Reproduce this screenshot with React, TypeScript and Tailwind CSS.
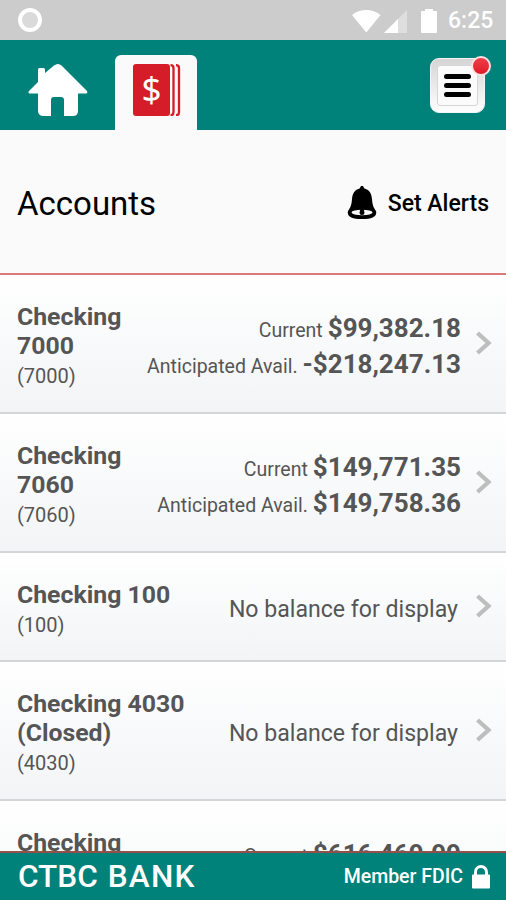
type Balance = { label: string; amount: string };
type Account = { name: string[]; number?: string; balances?: Balance[]; height: string };

const accounts: Account[] = [
  {
    name: ['Checking', '7000'],
    number: '(7000)',
    height: 'h-[139px]',
    balances: [
      { label: 'Current', amount: '$99,382.18' },
      { label: 'Anticipated Avail.', amount: '-$218,247.13' },
    ],
  },
  {
    name: ['Checking', '7060'],
    number: '(7060)',
    height: 'h-[139px]',
    balances: [
      { label: 'Current', amount: '$149,771.35' },
      { label: 'Anticipated Avail.', amount: '$149,758.36' },
    ],
  },
  { name: ['Checking 100'], number: '(100)', height: 'h-[109px]' },
  { name: ['Checking 4030', '(Closed)'], number: '(4030)', height: 'h-[139px]' },
  {
    name: ['Checking'],
    height: 'h-[139px]',
    balances: [{ label: 'Current', amount: '$616,469.99' }],
  },
];

function StatusBar() {
  return (
    <div className="flex h-10 shrink-0 items-center justify-between bg-[#cccccc] pr-3 pl-[18px]">
      <div className="size-6 rounded-full border-4 border-white bg-[#dadada]" />
      <div className="flex items-center pt-px">
        <svg width="85" height="26" viewBox="0 0 85 26" fill="#fff">
          <path d="M0 7C8 .2 20.500 .2 28.500 7L14.300 24.500Z" />
          <path d="M55 2V25H32Z" opacity=".35" />
          <path d="M46 11V25H32Z" />
          <path d="M73 1h8v3h-8z" />
          <rect x="69" y="3" width="16" height="22" rx="1" />
        </svg>
        <span className="ml-[11px] w-[46px] pt-px text-[23px] leading-6 font-medium whitespace-nowrap text-white">6:25</span>
      </div>
    </div>
  );
}

function HomeIcon() {
  return (
    <svg width="60" height="53" viewBox="0 0 60 53" fill="#fff">
      <path d="M10 5.500q0-1.500 1.500-1.500h4q1.500 0 1.500 1.500V9l9-7.500q4-3 7.500 0L59 27q1 2.500-1 2.500h-8V47q0 5-5 5h-9V36q0-3-3-3h-7q-3 0-3 3v16h-7q-6 0-6-5V29.500H2Q-.5 29.500 1 27l9-9Z" />
    </svg>
  );
}

function Header() {
  return (
    <header className="flex h-[90px] shrink-0 items-end bg-[#00827b] pl-7">
      <div className="mb-[13px] h-[53px] w-[60px]"><HomeIcon /></div>
      <div className="ml-[27px] flex h-[75px] w-[82px] justify-center rounded-t-[6px] bg-[#fafafa] pt-[9px] pl-px">
        <svg width="48" height="52" viewBox="0 0 48 52">
          <rect x="0" y="0" width="37" height="52" rx="3" fill="#d51c29" />
          <path d="M37.500 1.200q3 0 3 3v44q0 3-3 3M43 1.200q3 0 3 3v44q0 3-3 3" fill="none" stroke="#d51c29" strokeWidth="2.300" />
          <text x="18.500" y="37.500" textAnchor="middle" fontFamily="'Noto Sans', sans-serif" fontSize="35" fill="#fff">$</text>
        </svg>
      </div>
      <div className="relative mr-[21px] mb-[17px] ml-auto flex size-[55px] items-center justify-center rounded-[9px] border border-[#f5f5f5] bg-linear-to-b from-[#d5d5d5] to-white">
        <div className="flex h-[41px] w-[41px] flex-col items-center justify-center gap-1 rounded-[3px] border border-[#d6d6d6] bg-[#fbfbfb]">
          <div className="h-[5px] w-[27px] rounded-full bg-black" />
          <div className="h-[5px] w-[27px] rounded-full bg-black" />
          <div className="h-[5px] w-[27px] rounded-full bg-black" />
        </div>
        <div className="absolute -top-[3px] -right-[7px] size-5 rounded-full border-2 border-[#ffe3e3] bg-linear-to-b from-[#f03e49] to-[#df1827]" />
      </div>
    </header>
  );
}

function Chevron() {
  return (
    <svg width="16" height="24" viewBox="0 0 16 24" fill="none" stroke="#bebebe" strokeWidth="4.300">
      <path d="M1.500 2L12.500 12L1.500 22" />
    </svg>
  );
}

function AccountRow({ name, number, balances, height }: Account) {
  return (
    <li className={`flex ${height} shrink-0 border-b-2 border-[#d3d6d8] bg-linear-to-b from-white to-[#f2f4f6] pr-[14px] pl-[17px] text-[#555]`}>
      <div className="pt-[27px] whitespace-nowrap">
        {name.map((line) => (
          <div key={line} className="text-[24.800px] leading-[29px] font-bold">{line}</div>
        ))}
        {number && <div className="text-[20px] leading-[33px]">{number}</div>}
      </div>
      <div className={`ml-auto flex ${balances ? 'items-start' : 'items-center'}`}>
        {balances ? (
          <div className="mr-[15px] pt-[35px] text-right whitespace-nowrap">
            {balances.map((b) => (
              <div key={b.label} className="flex h-9 items-baseline justify-end leading-9">
                <span className="mr-[5px] text-[19.500px]">{b.label}</span>
                <span className="text-[26px] font-bold">{b.amount}</span>
              </div>
            ))}
          </div>
        ) : (
          <div className="mr-[18px] pt-[7px] text-[23.100px] whitespace-nowrap">No balance for display</div>
        )}
        <div className={balances ? 'pt-14' : 'pb-px'}><Chevron /></div>
      </div>
    </li>
  );
}

export default function App() {
  return (
    <div className="flex h-[900px] w-[506px] flex-col overflow-hidden bg-[#fafafa] font-['Roboto',sans-serif]">
      <StatusBar />
      <Header />
      <div className="flex h-[145px] shrink-0 items-center justify-between border-b-2 border-[#dc7779] pr-[17px] pl-[17px] pb-px text-black">
        <h1 className="pt-[5px] text-[33px] leading-10">Accounts</h1>
        <button className="flex items-center pt-1">
          <svg width="30" height="34" viewBox="0 0 30 34">
            <path d="M15 0C17 0 16.500 2 17.500 2.500C23 4 24.500 8 25 13C25.500 20 27 22 29 25Q31 33 15 33Q-1 33 1 25C3 22 4.500 20 5 13C5.500 8 7 4 12.500 2.500C13.500 2 13 0 15 0Z" />
            <ellipse cx="15" cy="26.500" rx="10.500" ry="2.700" fill="#fafafa" />
            <path d="M13.500 22h3l1 5q0 2-2.500 2t-2.500-2Z" />
          </svg>
          <span className="ml-[11px] pt-[2px] text-[23px] leading-8 font-medium whitespace-nowrap">Set Alerts</span>
        </button>
      </div>
      <ul className="flex min-h-0 flex-1 flex-col overflow-hidden">
        {accounts.map((account, i) => <AccountRow key={i} {...account} />)}
      </ul>
      <footer className="flex h-[49px] shrink-0 items-center justify-between border-t-2 border-[#96504c] bg-[#00827b] pr-4 pl-[18px] text-white">
        <div className="flex gap-[10px] text-[31.500px] leading-8 font-medium whitespace-nowrap">
          <span>CTBC</span>
          <span className="tracking-[1.200px]">BANK</span>
        </div>
        <div className="flex items-center">
          <span className="mr-[9px] pt-px text-[19.500px] leading-7 font-medium whitespace-nowrap">Member FDIC</span>
          <svg width="18" height="24" viewBox="0 0 18 24">
            <path d="M3.500 11V7a5.500 5.500 0 0 1 11 0v4" fill="none" stroke="#fff" strokeWidth="3" />
            <rect y="9.500" width="18" height="14" rx="1" fill="#fff" />
          </svg>
        </div>
      </footer>
    </div>
  );
}
